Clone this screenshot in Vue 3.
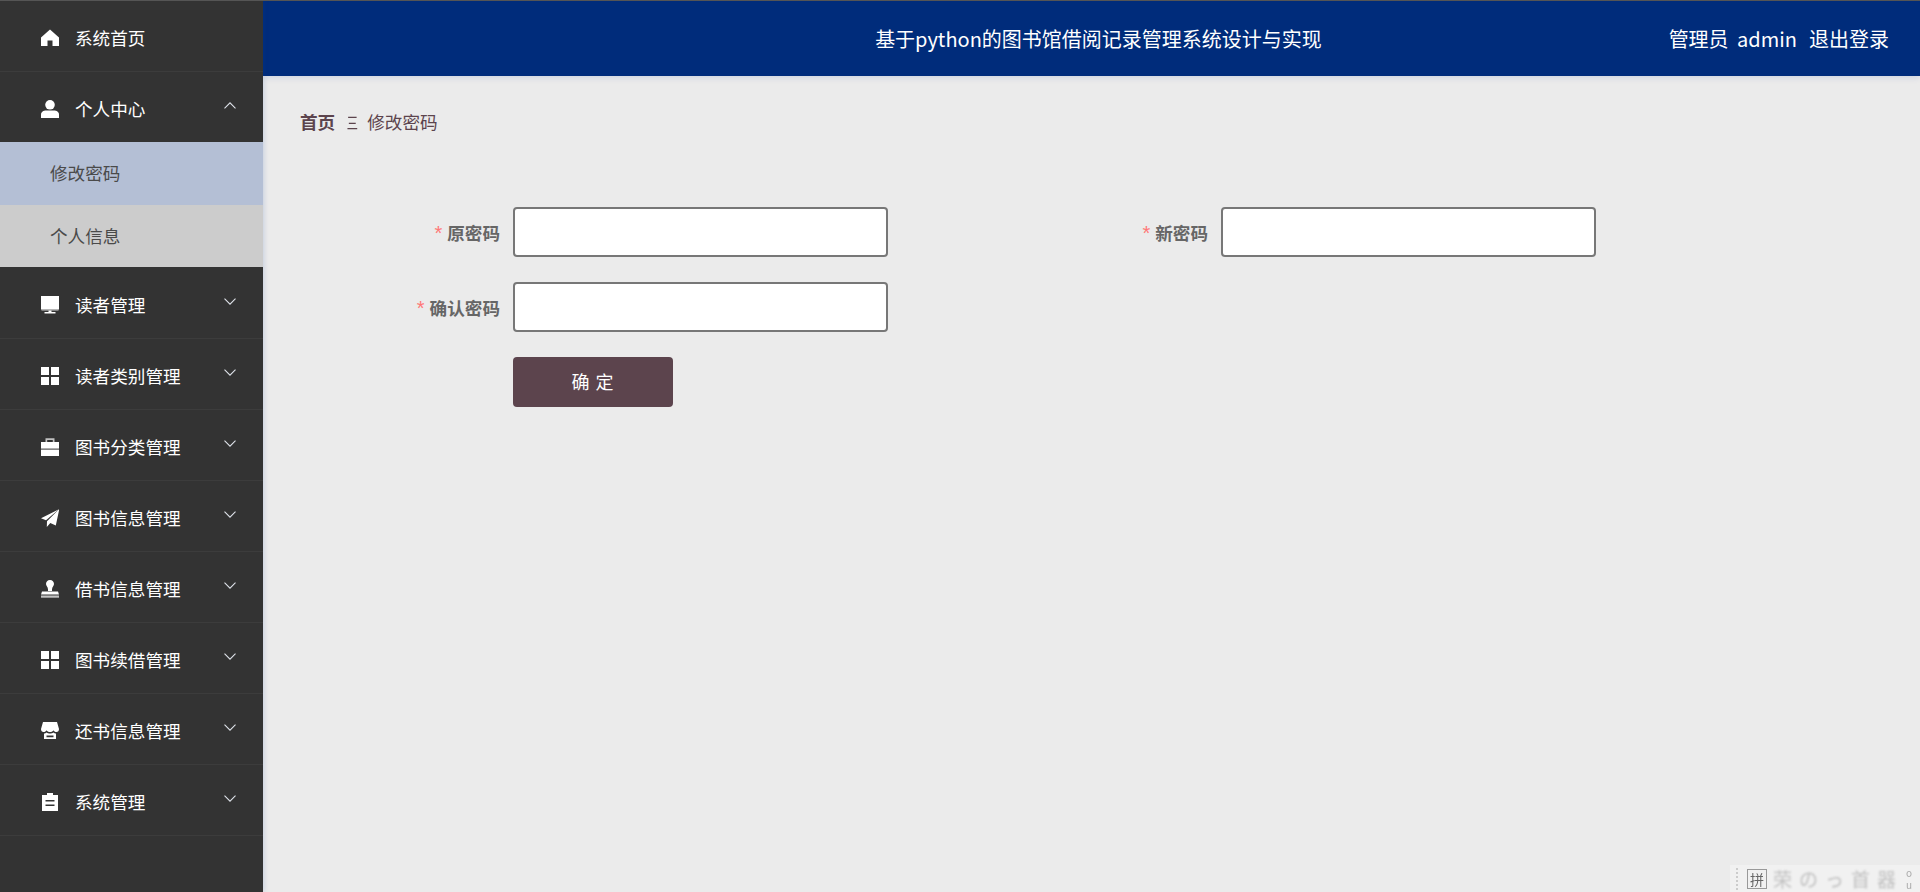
<script setup>
const menus = [
  { label: '系统首页', icon: 'home', arrow: '' },
  { label: '个人中心', icon: 'user', arrow: 'up', subs: ['修改密码', '个人信息'] },
  { label: '读者管理', icon: 'monitor', arrow: 'down' },
  { label: '读者类别管理', icon: 'grid', arrow: 'down' },
  { label: '图书分类管理', icon: 'case', arrow: 'down' },
  { label: '图书信息管理', icon: 'plane', arrow: 'down' },
  { label: '借书信息管理', icon: 'stamp', arrow: 'down' },
  { label: '图书续借管理', icon: 'grid', arrow: 'down' },
  { label: '还书信息管理', icon: 'shop', arrow: 'down' },
  { label: '系统管理', icon: 'board', arrow: 'down' }
]
const fields = [
  { label: '原密码' },
  { label: '新密码' },
  { label: '确认密码' }
]
const imeItems = ['荣', 'の', 'っ', '首', '器']
</script>

<template>
  <div class="shell">
    <aside class="side">
      <template v-for="m in menus" :key="m.label">
        <div class="row">
          <span class="label-wrap">
            <svg class="ico" viewBox="0 0 18 18" fill="#fff">
              <path v-if="m.icon === 'home'" d="M9 0.5 18 8.5V17H11.5V11.5H6.5V17H0V8.5Z" />
              <template v-else-if="m.icon === 'user'">
                <circle cx="9" cy="4.8" r="4.8" />
                <path d="M0 18V14.5C0 12 2.5 10.5 5 10.5H13C15.5 10.5 18 12 18 14.5V18Z" />
              </template>
              <template v-else-if="m.icon === 'monitor'">
                <rect x="0" y="0" width="18" height="13.5" />
                <rect x="0.5" y="13.5" width="17" height="1.2" opacity=".55" />
                <rect x="7.5" y="14.5" width="3" height="1.5" />
                <rect x="3.5" y="16" width="11" height="1.5" />
              </template>
              <template v-else-if="m.icon === 'grid'">
                <rect x="0" y="0" width="8" height="8" />
                <rect x="10" y="0" width="8" height="8" />
                <rect x="0" y="10" width="8" height="8" />
                <rect x="10" y="10" width="8" height="8" />
              </template>
              <template v-else-if="m.icon === 'case'">
                <path d="M4.5 4V0.3H13.5V4H11.8V2H6.2V4Z" opacity=".7" />
                <rect x="0" y="4" width="18" height="6.6" />
                <rect x="0" y="11.6" width="18" height="6.4" />
              </template>
              <template v-else-if="m.icon === 'plane'">
                <path d="M18.3 0 0 9.2 5 11.2Z" />
                <path d="M18.3 0 6 12.2 5.8 18 9.3 14 14.8 16.5Z" />
              </template>
              <template v-else-if="m.icon === 'stamp'">
                <path d="M9 0C11.5 0 13 1.8 13 4C13 6 11 7 11 9.5V11H7V9.5C7 7 5 6 5 4C5 1.8 6.5 0 9 0Z" />
                <path d="M1 11.5H17L18 14.5H0Z" />
                <rect x="0" y="15.5" width="18" height="2.2" opacity=".7" />
              </template>
              <template v-else-if="m.icon === 'shop'">
                <path d="M2 0H16L18 7C18 9 17 10 15.5 10C14 10 13 9.2 12.5 8.2C12 9.2 10.5 10 9 10C7.5 10 6 9.2 5.5 8.2C5 9.2 4 10 2.5 10C1 10 0 9 0 7Z" />
                <path d="M3 11.5C4 11.5 5 11 5.5 10.5C6.5 11.4 7.7 11.5 9 11.5C10.3 11.5 11.5 11.4 12.5 10.5C13 11 14 11.5 15 11.5V17H3ZM5.5 13.5V15.2H12.5V13.5Z" fill-rule="evenodd" />
              </template>
              <path v-else-if="m.icon === 'board'" fill-rule="evenodd" d="M6 0H12V2H17V18H1V2H6ZM4.5 7V8.4H13.5V7ZM4.5 11.5V12.9H13.5V11.5Z" />
            </svg>
            <span class="label">{{ m.label }}</span>
          </span>
          <svg v-if="m.arrow" class="chev" viewBox="0 0 12 7" fill="none" stroke="#dfe3ea" stroke-width="1.1">
            <path v-if="m.arrow === 'up'" d="M0.5 6.3 6 0.8 11.5 6.3" />
            <path v-else d="M0.5 0.7 6 6.2 11.5 0.7" />
          </svg>
        </div>
        <template v-if="m.subs">
          <div class="sub active">{{ m.subs[0] }}</div>
          <div class="sub plain">{{ m.subs[1] }}</div>
        </template>
      </template>
    </aside>

    <div class="main">
      <header class="top">
        <div class="title">基于python的图书馆借阅记录管理系统设计与实现</div>
        <div class="user">
          <span class="who">管理员 admin</span>
          <span>退出登录</span>
        </div>
      </header>

      <section class="page">
        <nav class="crumb">
          <b>首页</b>
          <span class="sep">三</span>
          <span>修改密码</span>
        </nav>

        <form class="form" @submit.prevent>
          <div v-for="f in fields" :key="f.label" class="item">
            <label class="flabel"><i>*</i>{{ f.label }}</label>
            <input class="inp" type="password" />
          </div>
          <div class="item btn-row">
            <span class="flabel"></span>
            <button class="btn" type="button">确 定</button>
          </div>
        </form>
      </section>
    </div>

    <div class="ime">
      <span class="dots"></span>
      <span class="pin">拼</span>
      <span v-for="(c, i) in imeItems" :key="i" class="ime-i">{{ c }}</span>
      <span class="ime-last"><em>o</em><em>u</em></span>
    </div>
  </div>
</template>

<style>
html, body { margin: 0; padding: 0; background: #ebebeb; }
</style>

<style scoped>
.shell {
  position: relative;
  display: flex;
  height: 892px;
  overflow: hidden;
  font-family: "Noto Sans CJK SC", "Liberation Sans", sans-serif;
  background: #ebebeb;
}
.shell::before {
  content: "";
  position: absolute;
  left: 0;
  right: 0;
  top: 0;
  height: 1px;
  background: #555;
  z-index: 5;
}
.side {
  width: 263px;
  flex: none;
  box-sizing: border-box;
  padding-top: 1px;
  background: #333;
  box-shadow: 1px 0 5px rgba(0, 60, 160, .16);
  z-index: 2;
}
.row {
  height: 71px;
  box-sizing: border-box;
  border-bottom: 1px solid #3c3c3c;
  display: flex;
  align-items: center;
  justify-content: space-between;
  padding: 0 27px 0 41px;
  color: #fff;
}
.label-wrap {
  display: flex;
  align-items: center;
  padding-top: 3px;
}
.ico {
  width: 18px;
  height: 18px;
  flex: none;
}
.label {
  margin-left: 16px;
  font-size: 17.6px;
  line-height: 24px;
}
.chev {
  width: 12px;
  height: 7px;
  margin-bottom: 4px;
}
.sub {
  display: flex;
  align-items: center;
  box-sizing: border-box;
  padding: 0 0 2px 50px;
  font-size: 17.6px;
  color: #4a4a4a;
}
.sub.active {
  height: 63px;
  margin-top: -1px;
  background: #b4bfd5;
}
.sub.plain {
  height: 63px;
  background: #ccc;
  border-bottom: 1px solid #333;
}
.main {
  flex: 1;
  min-width: 0;
  display: flex;
  flex-direction: column;
}
.top {
  height: 76px;
  flex: none;
  background: #002c7b;
  box-shadow: 0 2px 6px rgba(0, 60, 160, .12);
  display: grid;
  grid-template-columns: 1fr auto 1fr;
  align-items: center;
  color: #fff;
  font-size: 20px;
  padding: 0 31px 0 45px;
}
.title {
  grid-column: 2;
}
.user {
  grid-column: 3;
  justify-self: end;
  display: flex;
  gap: 12px;
  font-size: 20px;
}
.who {
  word-spacing: 4px;
}
.page {
  padding: 0 37px;
}
.crumb {
  display: flex;
  align-items: center;
  height: 24px;
  margin-top: 34px;
  font-size: 17.6px;
  color: #5c444d;
  line-height: 24px;
}
.crumb b { font-weight: 700; }
.sep {
  display: inline-block;
  font-size: 16px;
  width: 12px;
  margin: 0 10px 0 10px;
  text-align: center;
  transform: scaleX(.7);
  color: #5c444d;
}
.form {
  display: grid;
  grid-template-columns: 708px 1fr;
  row-gap: 25px;
  margin-top: 73px;
}
.item {
  display: flex;
  align-items: center;
  height: 50px;
}
.btn-row {
  grid-column: 1 / -1;
}
.flabel {
  width: 200px;
  flex: none;
  margin-right: 13px;
  text-align: right;
  font-size: 17.6px;
  font-weight: 700;
  color: #666;
}
.flabel i {
  font-family: "Liberation Sans", sans-serif;
  font-style: normal;
  font-size: 20px;
  font-weight: 400;
  color: #f77;
  margin-right: 5px;
}
.inp {
  width: 375px;
  height: 50px;
  box-sizing: border-box;
  border: 2px solid #777;
  border-radius: 4px;
  background: #fff;
  outline: none;
  padding: 0 12px;
}
.btn {
  width: 160px;
  height: 50px;
  border: 0;
  border-radius: 4px;
  background: #5c444d;
  color: #fff;
  font-family: inherit;
  font-size: 18px;
  letter-spacing: 1px;
  padding: 0 0 2px;
}
.ime {
  position: absolute;
  right: 0;
  bottom: 0;
  width: 190px;
  height: 27px;
  background: #f1f1f1;
  display: flex;
  align-items: center;
  color: #c0c0c0;
  font-size: 19px;
  z-index: 6;
}
.dots {
  width: 2px;
  height: 22px;
  margin-left: 6px;
  border-left: 2px dotted #ccc;
}
.pin {
  box-sizing: border-box;
  width: 20px;
  height: 20px;
  margin-left: 7px;
  border: 1px solid #999;
  color: #666;
  font-size: 14px;
  line-height: 18px;
  text-align: center;
  filter: blur(.4px);
}
.ime-i {
  width: 21px;
  margin-left: 5px;
  text-align: center;
  line-height: 22px;
  filter: blur(.9px);
}
.ime-last {
  margin-left: 9px;
  display: flex;
  flex-direction: column;
  font-size: 10px;
  line-height: 12px;
  color: #aaa;
  filter: blur(.5px);
}
.ime-last em { font-style: normal; }
</style>
